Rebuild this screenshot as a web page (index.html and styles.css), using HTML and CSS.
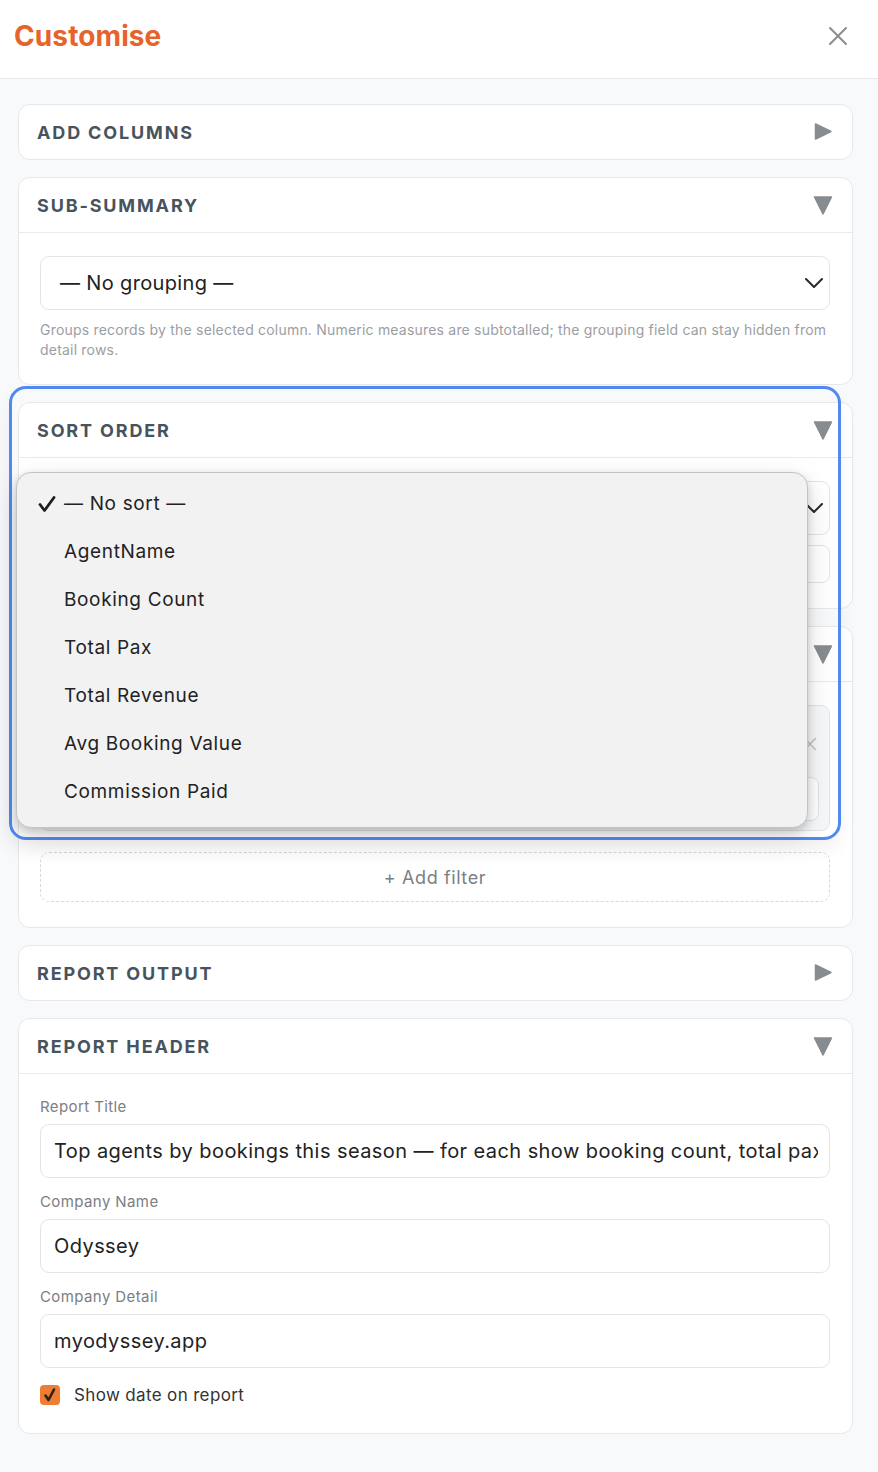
FILE: index.html
```html
<!DOCTYPE html>
<html lang="en">
<head>
<meta charset="utf-8">
<title>Customise</title>
<link rel="stylesheet" href="styles.css">
</head>
<body>
<div class="page">
  <header class="topbar">
    <h1 class="title">Customise</h1>
    <button class="close" aria-label="Close">
      <svg viewBox="0 0 20 20" width="20" height="20"><path d="M2 2 L18 18 M18 2 L2 18" stroke="#8a8d90" stroke-width="2" stroke-linecap="round" fill="none"/></svg>
    </button>
  </header>

  <main class="panels">
    <section class="card">
      <div class="card-head">
        <span class="card-title">ADD COLUMNS</span>
        <svg class="tri" viewBox="0 0 20 20" width="20" height="20"><path d="M2.5 2 L18 9.5 L2.5 17 Z" fill="#878c90" stroke="#878c90" stroke-width="1.5" stroke-linejoin="round"/></svg>
      </div>
    </section>

    <section class="card open">
      <div class="card-head">
        <span class="card-title">SUB-SUMMARY</span>
        <svg class="tri" viewBox="0 0 20 20" width="20" height="20"><path d="M1.5 2 L18.5 2 L10 19 Z" fill="#878c90" stroke="#878c90" stroke-width="1.5" stroke-linejoin="round"/></svg>
      </div>
      <div class="card-body">
        <div class="select">
          <span>— No grouping —</span>
          <svg class="chev" viewBox="0 0 18 10" width="18" height="10"><path d="M1 1 L9 9 L17 1" stroke="#2a2a2a" stroke-width="2" fill="none" stroke-linecap="round" stroke-linejoin="round"/></svg>
        </div>
        <p class="help">Groups records by the selected column. Numeric measures are subtotalled; the grouping field can stay hidden from detail rows.</p>
      </div>
    </section>

    <section class="card open">
      <div class="card-head">
        <span class="card-title">SORT ORDER</span>
        <svg class="tri" viewBox="0 0 20 20" width="20" height="20"><path d="M1.5 2 L18.5 2 L10 19 Z" fill="#878c90" stroke="#878c90" stroke-width="1.5" stroke-linejoin="round"/></svg>
      </div>
      <div class="card-body sort-body">
        <div class="select">
          <span>— No sort —</span>
          <svg class="chev" viewBox="0 0 18 10" width="18" height="10"><path d="M1 1 L9 9 L17 1" stroke="#2a2a2a" stroke-width="2" fill="none" stroke-linecap="round" stroke-linejoin="round"/></svg>
        </div>
        <div class="small-select">Ascending</div>
      </div>
    </section>

    <section class="card open">
      <div class="card-head">
        <span class="card-title">FILTERS</span>
        <svg class="tri" viewBox="0 0 20 20" width="20" height="20"><path d="M1.5 2 L18.5 2 L10 19 Z" fill="#878c90" stroke="#878c90" stroke-width="1.5" stroke-linejoin="round"/></svg>
      </div>
      <div class="card-body filter-body">
        <div class="filter-row">
          <div class="filter-top">
            <div class="mini-select">AgentName</div>
            <svg class="remove" viewBox="0 0 14 14" width="14" height="14"><path d="M1 1 L13 13 M13 1 L1 13" stroke="#c4c6c8" stroke-width="1.6" fill="none"/></svg>
          </div>
          <div class="mini-input"></div>
        </div>
        <div class="add-filter">+ Add filter</div>
      </div>
    </section>

    <section class="card">
      <div class="card-head">
        <span class="card-title">REPORT OUTPUT</span>
        <svg class="tri" viewBox="0 0 20 20" width="20" height="20"><path d="M2.5 2 L18 9.5 L2.5 17 Z" fill="#878c90" stroke="#878c90" stroke-width="1.5" stroke-linejoin="round"/></svg>
      </div>
    </section>

    <section class="card open">
      <div class="card-head">
        <span class="card-title">REPORT HEADER</span>
        <svg class="tri" viewBox="0 0 20 20" width="20" height="20"><path d="M1.5 2 L18.5 2 L10 19 Z" fill="#878c90" stroke="#878c90" stroke-width="1.5" stroke-linejoin="round"/></svg>
      </div>
      <div class="card-body form-body">
        <label class="field">
          <span class="label">Report Title</span>
          <span class="input"><span class="value">Top agents by bookings this season — for each show booking count, total pax</span></span>
        </label>
        <label class="field">
          <span class="label">Company Name</span>
          <span class="input"><span class="value">Odyssey</span></span>
        </label>
        <label class="field">
          <span class="label">Company Detail</span>
          <span class="input"><span class="value">myodyssey.app</span></span>
        </label>
        <div class="check-row">
          <span class="checkbox">
            <svg viewBox="0 0 20 20" width="20" height="20"><path d="M5.5 10.5 L8.5 15 L14 4.5" stroke="#2b2118" stroke-width="2.6" fill="none" stroke-linecap="round" stroke-linejoin="round"/></svg>
          </span>
          <span class="check-label">Show date on report</span>
        </div>
      </div>
    </section>
  </main>

  <div class="focus-ring"></div>

  <ul class="popup">
    <li class="opt selected">
      <svg class="tick" viewBox="0 0 18 18" width="18" height="18"><path d="M2 9.5 L6.5 15.5 L16 2.5" stroke="#1e1e1e" stroke-width="2.8" fill="none" stroke-linecap="round" stroke-linejoin="round"/></svg>
      — No sort —
    </li>
    <li class="opt">AgentName</li>
    <li class="opt">Booking Count</li>
    <li class="opt">Total Pax</li>
    <li class="opt">Total Revenue</li>
    <li class="opt">Avg Booking Value</li>
    <li class="opt">Commission Paid</li>
  </ul>
</div>
</body>
</html>
```

FILE: styles.css
```css
* { box-sizing: border-box; }

body {
  margin: 0;
  font-family: Inter, "Noto Sans", sans-serif;
  background: #f8f9fb;
  color: #222;
}

.page {
  position: relative;
  width: 878px;
  min-height: 1472px;
}

/* top bar */
.topbar {
  height: 79px;
  background: #fff;
  border-bottom: 1px solid #e5e8ec;
  display: flex;
  align-items: center;
  justify-content: space-between;
  padding: 0 30px 6px 14px;
}

.title {
  margin: 0;
  font-size: 28px;
  font-weight: 700;
  color: #e6632b;
  letter-spacing: 0.1px;
}

.close {
  border: 0;
  background: none;
  padding: 0;
  width: 20px;
  height: 20px;
  display: flex;
}

/* panel stack */
.panels {
  display: flex;
  flex-direction: column;
  gap: 17px;
  padding: 25px 25px 40px 18px;
}

.card {
  background: #fff;
  border: 1px solid #e6e8ec;
  border-radius: 12px;
}

.card-head {
  height: 54px;
  display: flex;
  align-items: center;
  justify-content: space-between;
  padding: 0 19px 0 18px;
}

.card.open .card-head {
  height: 55px;
  border-bottom: 1px solid #e8eaed;
}

.card-title {
  font-size: 18px;
  font-weight: 700;
  letter-spacing: 1.85px;
  color: #47535d;
}

.tri { display: block; }

.card-body {
  padding: 23px 22px 24px 21px;
}

/* select boxes */
.select {
  height: 54px;
  border: 1px solid #e2e4e8;
  border-radius: 9px;
  display: flex;
  align-items: center;
  justify-content: space-between;
  padding: 0 6px 0 19px;
  font-size: 20px;
  letter-spacing: 0.35px;
  color: #222;
  background: #fff;
}

.chev { display: block; }

.help {
  margin: 10px 0 0;
  font-size: 14px;
  line-height: 20px;
  letter-spacing: 0.2px;
  color: #9b9ea2;
}

.sort-body { padding-bottom: 25px; }

.small-select {
  margin-top: 10px;
  height: 38px;
  border: 1px solid #e2e4e8;
  border-radius: 8px;
  padding: 0 14px;
  display: flex;
  align-items: center;
  font-size: 16px;
  color: #222;
}

/* filters */
.filter-body { padding-bottom: 25px; }

.filter-row {
  height: 126px;
  border: 1px solid #e2e4e8;
  border-radius: 9px;
  background: #f7f8f9;
  padding: 10px 10px 0 12px;
}

.filter-top {
  display: flex;
  align-items: center;
  gap: 10px;
  height: 56px;
}

.mini-select {
  flex: 1;
  height: 44px;
  border: 1px solid #e2e4e8;
  border-radius: 8px;
  background: #fff;
  display: flex;
  align-items: center;
  padding: 0 12px;
  font-size: 16px;
}

.remove { display: block; margin-right: 2px; }

.mini-input {
  margin-top: 5px;
  height: 44px;
  border: 1px solid #e2e4e8;
  border-radius: 8px;
  background: #fff;
}

.add-filter {
  margin-top: 21px;
  height: 50px;
  border: 1px dashed #d6d8db;
  border-radius: 9px;
  display: flex;
  align-items: center;
  justify-content: center;
  font-size: 18px;
  letter-spacing: 0.6px;
  color: #7a8085;
}

/* form */
.form-body {
  padding-top: 23px;
  padding-bottom: 28px;
}

.field {
  display: block;
  margin-bottom: 14px;
}

.label {
  display: block;
  font-size: 15px;
  line-height: 20px;
  letter-spacing: 0.4px;
  color: #7b7e82;
  margin-bottom: 7px;
}

.input {
  display: block;
  height: 54px;
  border: 1px solid #e2e4e8;
  border-radius: 9px;
  padding: 0 11px 0 13px;
  background: #fff;
}

.value {
  display: block;
  line-height: 52px;
  font-size: 20px;
  letter-spacing: 0.42px;
  color: #222;
  white-space: nowrap;
  overflow: hidden;
}

.check-row {
  display: flex;
  align-items: center;
  gap: 14px;
  margin-top: 17px;
  height: 20px;
}

.checkbox {
  width: 20px;
  height: 20px;
  border-radius: 4px;
  background: #ee7c33;
  display: flex;
  align-items: center;
  justify-content: center;
}

.check-label {
  font-size: 17px;
  letter-spacing: 0.35px;
  color: #333;
}

/* open select overlay */
.focus-ring {
  position: absolute;
  left: 9px;
  top: 386px;
  width: 832px;
  height: 454px;
  border: 3px solid #5189f2;
  border-radius: 17px;
  box-shadow: 0 10px 18px rgba(0, 0, 0, 0.05);
  pointer-events: none;
}

.popup {
  position: absolute;
  left: 16px;
  top: 472px;
  width: 792px;
  height: 356px;
  margin: 0;
  padding: 6px 0 14px;
  list-style: none;
  background: #f2f2f2;
  border: 1px solid #c4c4c4;
  border-radius: 15px;
  box-shadow: 0 4px 10px rgba(0, 0, 0, 0.18), 0 10px 30px rgba(0, 0, 0, 0.12);
}

.opt {
  position: relative;
  height: 48px;
  display: flex;
  align-items: center;
  padding-left: 47px;
  font-size: 19px;
  letter-spacing: 0.65px;
  color: #222;
}

.tick {
  position: absolute;
  left: 21px;
  top: 16px;
}
```
